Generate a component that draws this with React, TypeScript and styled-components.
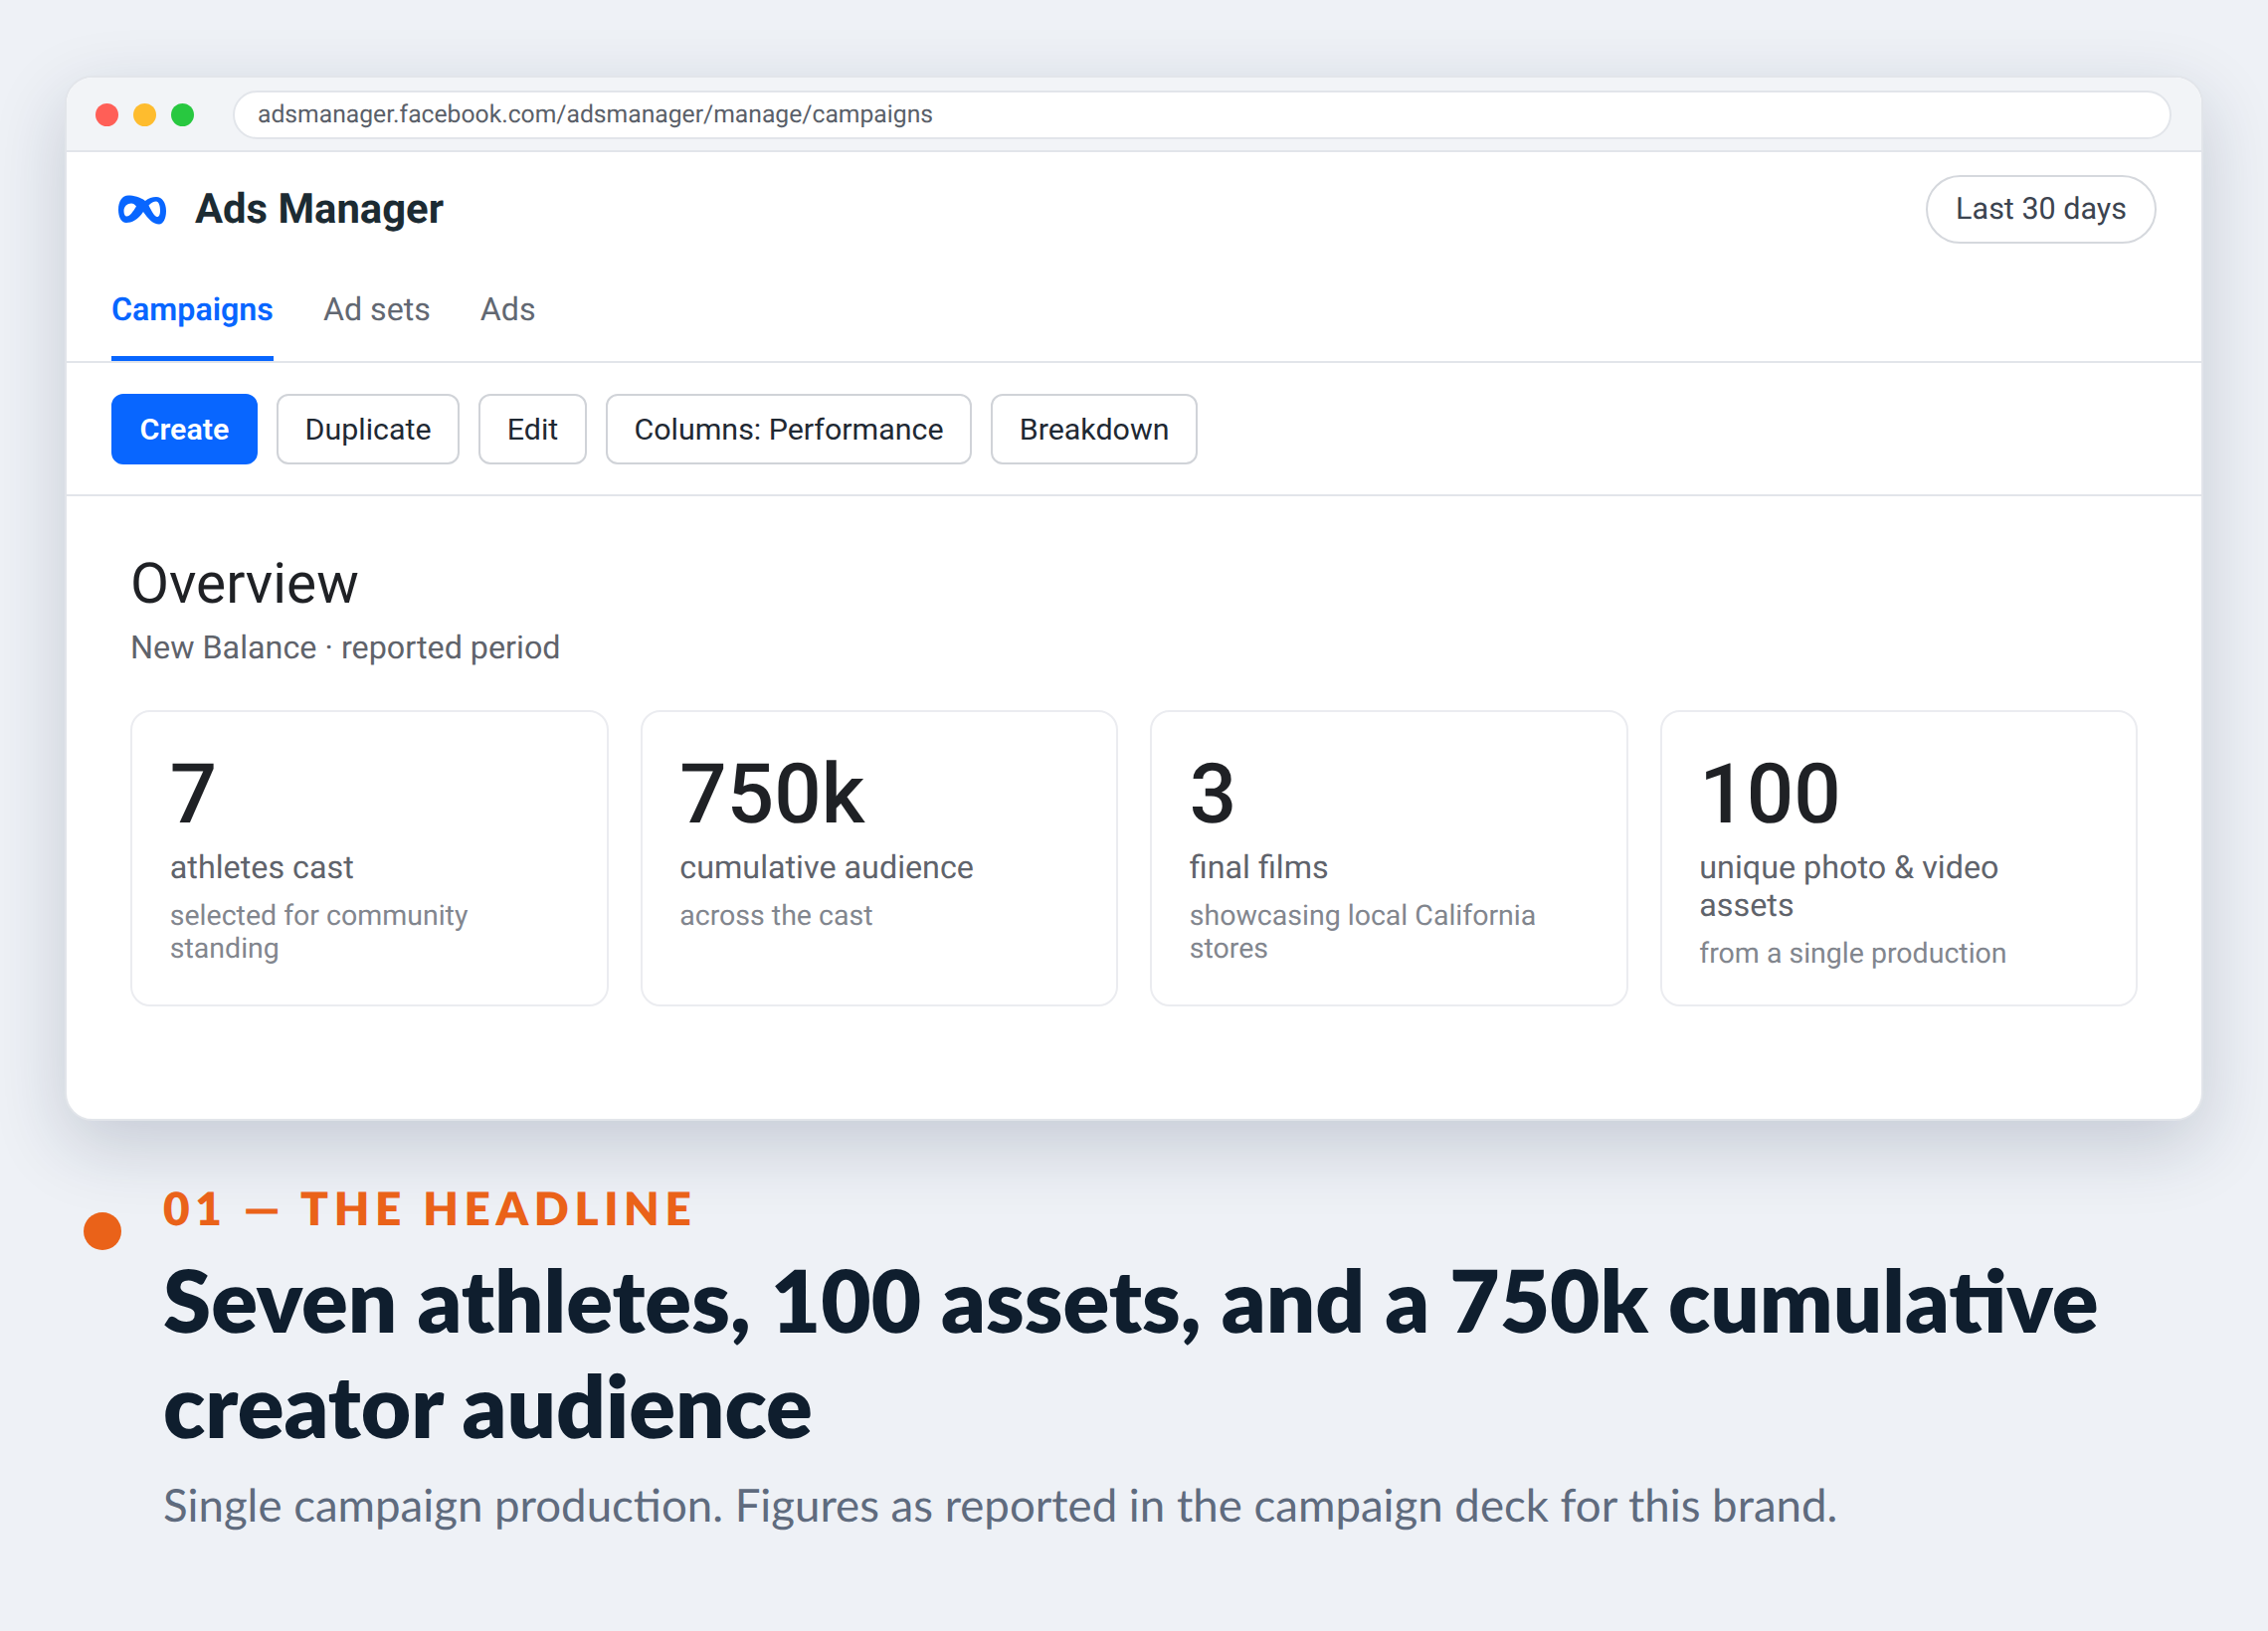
import styled, { createGlobalStyle } from 'styled-components';

const GlobalStyle = createGlobalStyle`
  html, body {
    margin: 0;
    padding: 0;
    background: #eef1f6;
  }
  body {
    width: 2280px;
    height: 1640px;
    overflow: hidden;
    font-family: Roboto, "Liberation Sans", sans-serif;
    text-rendering: geometricPrecision;
    -webkit-font-smoothing: antialiased;
  }
`;

const stats = [
  { value: '7', label: 'athletes cast', note: 'selected for community standing' },
  { value: '750k', label: 'cumulative audience', note: 'across the cast' },
  { value: '3', label: 'final films', note: 'showcasing local California stores' },
  { value: '100', label: 'unique photo & video assets', note: 'from a single production' },
];

const actions = ['Duplicate', 'Edit', 'Columns: Performance', 'Breakdown'];

export default function App() {
  return (
    <>
      <GlobalStyle />
      <Page>
        <BrowserWindow>
          <TitleBar>
            <Dots>
              <Dot $color="#ff5f57" />
              <Dot $color="#febc2e" />
              <Dot $color="#28c840" />
            </Dots>
            <UrlBar>adsmanager.facebook.com/adsmanager/manage/campaigns</UrlBar>
          </TitleBar>

          <Header>
            <Brand>
              <svg width="48" height="30" viewBox="0 0 48 30">
                <path
                  fillRule="evenodd"
                  fill="#0866ff"
                  d="M0 15C0 6 4 .5 10 .5C15 .5 22 2 27 6C30 3.500 34 2 38 2C44 2 48 8 48 16C48 24 45 29.500 41 29.500C35 29.500 30 24 25 17C20 25 13 28 8 28C3 28 0 22 0 15ZM13 8.500C9 8.500 5.500 11.500 5.500 16C5.500 19.500 6.500 21.500 8.500 21.500C11.500 21.500 15 16.500 18 11.500C16.500 9.500 15 8.500 13 8.500ZM30.500 10.500C33 8 35.500 6.500 38 6.500C40.500 6.500 42 10.500 42 15.500C42 19.500 41 22 39 22C36.500 22 33.500 16.500 30.500 10.500Z"
                />
              </svg>
              <BrandName>Ads Manager</BrandName>
            </Brand>
            <RangePill>Last 30 days</RangePill>
          </Header>

          <Tabs>
            <Tab $active>Campaigns</Tab>
            <Tab>Ad sets</Tab>
            <Tab>Ads</Tab>
          </Tabs>

          <Toolbar>
            <PrimaryButton>Create</PrimaryButton>
            {actions.map((action) => (
              <Button key={action}>{action}</Button>
            ))}
          </Toolbar>

          <Overview>
            <Title>Overview</Title>
            <Subtitle>New Balance · reported period</Subtitle>
            <Cards>
              {stats.map((stat) => (
                <Card key={stat.value}>
                  <Value>{stat.value}</Value>
                  <Label>{stat.label}</Label>
                  <Note>{stat.note}</Note>
                </Card>
              ))}
            </Cards>
          </Overview>
        </BrowserWindow>

        <Caption>
          <Marker />
          <CaptionText>
            <Eyebrow>01 — THE HEADLINE</Eyebrow>
            <Headline>Seven athletes, 100 assets, and a 750k cumulative creator audience</Headline>
            <Summary>Single campaign production. Figures as reported in the campaign deck for this brand.</Summary>
          </CaptionText>
        </Caption>
      </Page>
    </>
  );
}

const Page = styled.div`
  width: 2280px;
  height: 1640px;
  box-sizing: border-box;
  padding: 76px 65px 0;
  background: #eef1f6;
`;

const BrowserWindow = styled.div`
  height: 1051px;
  box-sizing: border-box;
  background: #fff;
  border: 2px solid #e2e5ea;
  border-radius: 28px;
  box-shadow: 0 24px 72px rgba(20, 35, 70, 0.19);
  overflow: hidden;
`;

const TitleBar = styled.div`
  height: 75px;
  box-sizing: border-box;
  display: flex;
  align-items: center;
  gap: 39px;
  padding: 1px 30px 0 29px;
  background: #f2f4f7;
  border-bottom: 2px solid #e2e5ea;
`;

const Dots = styled.div`
  display: flex;
  gap: 15px;
`;

const Dot = styled.span<{ $color: string }>`
  width: 23px;
  height: 23px;
  border-radius: 50%;
  background: ${(p) => p.$color};
`;

const UrlBar = styled.div`
  flex: 1;
  height: 49px;
  box-sizing: border-box;
  display: flex;
  align-items: center;
  padding: 0 23px;
  background: #fff;
  border: 2px solid #e2e5ea;
  border-radius: 25px;
  color: #5a5f69;
  font-size: 24.700px;
`;

const Header = styled.div`
  display: flex;
  justify-content: space-between;
  align-items: center;
  padding: 23px 45px 0 52px;
`;

const Brand = styled.div`
  display: flex;
  align-items: center;
  gap: 29px;
`;

const BrandName = styled.div`
  color: #1c2b33;
  font-size: 41.800px;
  font-weight: 700;
  margin-top: -1px;
`;

const RangePill = styled.div`
  height: 69px;
  box-sizing: border-box;
  display: flex;
  align-items: center;
  padding: 0 28px;
  border: 2px solid #d5d8dd;
  border-radius: 35px;
  color: #3c4450;
  font-size: 30.500px;
`;

const Tabs = styled.div`
  display: flex;
  gap: 50px;
  height: 120px;
  box-sizing: border-box;
  padding: 0 45px;
  border-bottom: 2px solid #e2e5ea;
`;

const Tab = styled.div<{ $active?: boolean }>`
  display: flex;
  align-items: center;
  padding-top: 18px;
  box-sizing: border-box;
  height: 118px;
  color: ${(p) => (p.$active ? '#0866ff' : '#626872')};
  font-size: 32.200px;
  font-weight: ${(p) => (p.$active ? 600 : 400)};
  border-bottom: ${(p) => (p.$active ? '5px solid #0866ff' : '5px solid transparent')};
`;

const Toolbar = styled.div`
  display: flex;
  gap: 19px;
  padding: 31px 45px;
  height: 134px;
  box-sizing: border-box;
  border-bottom: 2px solid #e2e5ea;
`;

const Button = styled.button`
  height: 71px;
  padding: 0 26.600px;
  background: #fff;
  border: 2px solid #d0d3d8;
  border-radius: 12px;
  color: #1f2933;
  font-family: inherit;
  font-size: 30.400px;
`;

const PrimaryButton = styled(Button)`
  background: #0866ff;
  border-color: #0866ff;
  color: #fff;
  font-weight: 600;
`;

const Overview = styled.div`
  padding: 54.500px 64px;
`;

const Title = styled.div`
  color: #1f2125;
  font-size: 56.700px;
  line-height: 66px;
`;

const Subtitle = styled.div`
  margin-top: 10px;
  color: #5f636b;
  font-size: 32.300px;
  line-height: 42px;
`;

const Cards = styled.div`
  display: grid;
  grid-template-columns: repeat(4, 1fr);
  gap: 32px;
  margin-top: 42px;
`;

const Card = styled.div`
  height: 298px;
  box-sizing: border-box;
  padding: 37px 38px 37px 37.800px;
  background: #fff;
  border: 2px solid #ebecf0;
  border-radius: 20px;
`;

const Value = styled.div`
  color: #1f2125;
  font-size: 83.500px;
  font-weight: 500;
  line-height: 94px;
`;

const Label = styled.div`
  margin-top: 6.500px;
  color: #5f636b;
  font-size: 32.300px;
  line-height: 38px;
`;

const Note = styled.div`
  margin-top: 13px;
  color: #82868e;
  font-size: 28.500px;
  line-height: 33px;
`;

const Caption = styled.div`
  display: flex;
  gap: 42px;
  margin-top: 62px;
  padding-left: 19px;
  font-family: Lato, "Liberation Sans", sans-serif;
`;

const Marker = styled.div`
  flex: none;
  width: 38px;
  height: 38px;
  margin-top: 29.500px;
  border-radius: 50%;
  background: #ea6219;
`;

const CaptionText = styled.div`
  flex: 1;
`;

const Eyebrow = styled.div`
  color: #ea6219;
  font-size: 46px;
  font-weight: 800;
  letter-spacing: 5.600px;
  line-height: 52px;
`;

const Headline = styled.div`
  margin-top: 13px;
  color: #0f1e2e;
  font-size: 86.900px;
  font-weight: 800;
  line-height: 106px;
`;

const Summary = styled.div`
  margin-top: 18px;
  color: #5f6b7e;
  font-size: 45.600px;
  line-height: 58px;
`;
